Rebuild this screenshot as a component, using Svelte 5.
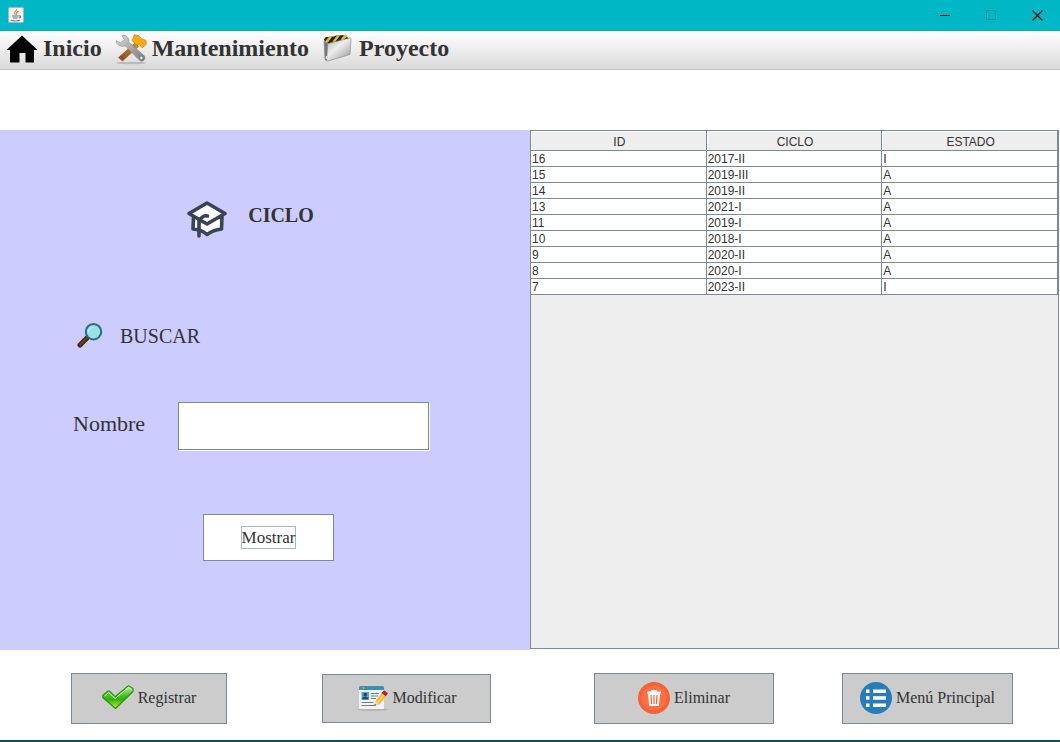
<script>
  const rows = [
    [16, '2017-II', 'I'],
    [15, '2019-III', 'A'],
    [14, '2019-II', 'A'],
    [13, '2021-I', 'A'],
    [11, '2019-I', 'A'],
    [10, '2018-I', 'A'],
    [9, '2020-II', 'A'],
    [8, '2020-I', 'A'],
    [7, '2023-II', 'I']
  ];
  let nombre = $state('');
</script>

<div class="window">
  <header class="titlebar">
    <svg class="java" width="16" height="16" viewBox="0 0 16 16" aria-hidden="true">
      <rect x=".5" y=".5" width="15" height="15" rx="1" fill="#f3f3f1" stroke="#a7b8ba" />
      <path d="M8.6 2.200c.8 1.500-2.700 2.400-2 4 .2.500.6.8 1 1.300M10.600 4.200C9 4.800 8 5.600 8.600 6.500c.3.500.1.9-.3 1.300" fill="none" stroke="#d9803c" stroke-width="1.100" />
      <path d="M4 9h6.400M4.800 11h5M3 13.200c2 .7 6.800 .7 9 0M10.500 9c3-.7 2.600 1.700.4 2" fill="none" stroke="#58788e" stroke-width="1.100" />
    </svg>
    <div class="controls">
      <button aria-label="Minimizar"><svg width="12" height="11" viewBox="0 0 12 11"><path d="M1 5.500h10" stroke="#111" /></svg></button>
      <button aria-label="Maximizar" disabled><svg width="11" height="11" viewBox="0 0 11 11"><path d="M.5.5h9v9h-9z" fill="none" stroke="#068f9c" /></svg></button>
      <button aria-label="Cerrar"><svg width="11" height="11" viewBox="0 0 11 11"><path d="M.5.5l10 10M10.500.5l-10 10" stroke="#111" stroke-width="1.200" /></svg></button>
    </div>
  </header>

  <nav class="menu">
    <button>
      <svg width="32" height="32" viewBox="0 0 32 32" aria-hidden="true"><path d="M16 2.500L31.500 17H28v12.500h-8.500V20h-6v9.500H4V17H.5z" fill="#000" /></svg>
      <span>Inicio</span>
    </button>
    <button>
      <svg width="32" height="32" viewBox="0 0 32 32" aria-hidden="true">
        <defs>
          <linearGradient id="steel" x1="0" y1="0" x2="1" y2="1"><stop stop-color="#ddd" /><stop offset=".5" stop-color="#a9a9a9" /><stop offset="1" stop-color="#777" /></linearGradient>
          <linearGradient id="wood" x1="1" y1="0" x2="0" y2="1"><stop stop-color="#d78b35" /><stop offset="1" stop-color="#85451b" /></linearGradient>
        </defs>
        <ellipse cx="16" cy="30" rx="15" ry="1.300" fill="#bbb" />
        <path d="M20 10l3.500 3.500L7.500 28 3.500 24.500z" fill="url(#wood)" stroke="#955626" stroke-width=".6" />
        <path d="M19.500 1.500l4.500 1.300 2.500 3 4.500 1.700.2 4-4 3.300-3-3-2.400.4-5-5 1.500-2.400z" fill="#f7a915" stroke="#d88305" stroke-width=".7" />
        <path d="M7 2.500c4-.9 7.300 2 6.700 6.500L29.600 23c1.400 3.400-1.800 6.400-4.600 4.800L10.200 12.800C6 14.400 1.400 11.800 1 7.700l4.500 2.100 3.800-3z" fill="url(#steel)" stroke="#888" stroke-width=".6" />
        <circle cx="26.300" cy="25" r="1.200" fill="#eee" />
      </svg>
      <span>Mantenimiento</span>
    </button>
    <button>
      <svg width="32" height="32" viewBox="0 0 32 32" aria-hidden="true">
        <defs><linearGradient id="folder" x1="0" y1="0" x2="1" y2="1"><stop stop-color="#aaa" /><stop offset=".45" stop-color="#eee" /><stop offset="1" stop-color="#929292" /></linearGradient></defs>
        <path d="M2 6.500L4 4l8-.4 2-1.100 10-.5 2 3-.4 4L4 12z" fill="#242018" />
        <path d="M3 8.500l4-4.700 3.200-.1L5.500 10zM10 9l5-6.500 3.200-.2L13.500 8.500zM18 7.500l4-5.400 2.300-.1 1 1.600L21.500 7z" fill="#e0b92c" />
        <path d="M2 8l4 2.500L28 5c1 0 1.300.5 1 1.500l-1 15L6 28c-2 .3-3-1-3-2.500z" fill="url(#folder)" stroke="#868686" stroke-width=".6" />
        <path d="M2.300 8.500l3.600 2.200L5 27.500c-1.600-.2-2.200-1.200-2.200-2.500z" fill="#777" />
        <path d="M4.500 23v3" stroke="#eee" stroke-width="1.500" />
      </svg>
      <span>Proyecto</span>
    </button>
  </nav>

  <main>
    <section class="search">
      <h1>
        <svg width="42" height="38" viewBox="0 0 42 38" aria-hidden="true" fill="#fff" stroke="#3a4255" stroke-width="3.600" stroke-linecap="round" stroke-linejoin="round">
          <path d="M7.500 17L7 29c4 .3 9.500 1.500 14 5.500 4.500-3.300 9-4.800 14.500-5.500L36 17z" />
          <path d="M21 3L39 13.500 21 24 3 13.500z" />
          <path d="M21.500 16c-2-.8-5 .2-8.500 4.500V36" fill="none" />
        </svg>
        CICLO
      </h1>
      <h2>
        <svg width="26" height="26" viewBox="0 0 26 26" aria-hidden="true">
          <path d="M10.500 14.500L3 22" stroke="#43220d" stroke-width="5" stroke-linecap="round" />
          <path d="M10 15L3.500 21.500" stroke="#71401e" stroke-width="2.200" stroke-linecap="round" />
          <circle cx="16.500" cy="8.700" r="7.700" fill="#9de1e8" stroke="#286f73" stroke-width="2" />
          <path d="M11.500 9c.2-3 2-4.600 5-4.700" fill="none" stroke="#c3f0f3" stroke-width="1" />
        </svg>
        BUSCAR
      </h2>
      <div class="field">
        <label for="nombre">Nombre</label>
        <input id="nombre" type="text" bind:value={nombre} />
      </div>
      <button class="show"><span>Mostrar</span></button>
    </section>

    <section class="pane">
      <table>
        <thead>
          <tr><th>ID</th><th>CICLO</th><th>ESTADO</th></tr>
        </thead>
        <tbody>
          {#each rows as row}
            <tr>{#each row as cell}<td>{cell}</td>{/each}</tr>
          {/each}
        </tbody>
      </table>
    </section>
  </main>

  <footer>
    <button>
      <svg width="32" height="32" viewBox="0 0 32 32" aria-hidden="true">
        <defs><linearGradient id="check" x1="0" y1="0" x2="0" y2="1"><stop stop-color="#b9f3a1" /><stop offset=".45" stop-color="#3fc21e" /><stop offset=".6" stop-color="#2eb30c" /><stop offset="1" stop-color="#c6f23b" /></linearGradient></defs>
        <path d="M.8 13.500L6 9l1.500.2 5.500 5.500L26.500 3.800l4.500 2.700v3L13.500 26.500.8 15.500z" fill="url(#check)" stroke="#2b8f17" stroke-width="1.200" stroke-linejoin="round" />
        <path d="M2.500 14L6.700 10.500 13 16.500 26.600 5.300 29.500 7.300" fill="none" stroke="#d4f8c3" stroke-width="1" />
      </svg>
      Registrar
    </button>
    <button class="modify">
      <svg width="32" height="32" viewBox="0 0 32 32" aria-hidden="true">
        <ellipse cx="16" cy="27.500" rx="15.500" ry="1.300" fill="#b2b2b2" />
        <rect x="2" y="5" width="25" height="22" rx="1" fill="#f2f3f5" />
        <path d="M2 8V5.500Q2 4 3.500 4h22Q27 4 27 5.500V8z" fill="#3990b4" />
        <circle cx="4" cy="6" r=".8" fill="#eb5c40" /><circle cx="6.500" cy="6" r=".8" fill="#f4cb45" />
        <rect x="4.500" y="10" width="7.500" height="7.500" fill="#55a6c6" />
        <circle cx="8.200" cy="12.500" r="1.800" fill="#174c70" /><path d="M5 17.500q.5-3 3.200-3t3.300 3z" fill="#174c70" />
        <path d="M14 11.500h8M14 14h7M14 16.500h5M4.500 20.500h12M4.500 23.500h13" stroke="#6c7f91" stroke-width="1.200" />
        <path d="M18.500 19L26 9.500l4 3-7.500 10-5 1z" fill="#f6b52d" />
        <path d="M20.500 21L28 11" stroke="#ffdc75" stroke-width="1.300" />
        <path d="M24.500 11L27 8.300l4 3-2.200 3z" fill="#a82836" />
        <path d="M18.500 19l4 3.500-5.200 1.200z" fill="#f3d7ae" /><path d="M17.800 22l1.500 1.300-2 .5z" fill="#222" />
      </svg>
      Modificar
    </button>
    <button>
      <svg width="32" height="32" viewBox="0 0 32 32" aria-hidden="true">
        <circle cx="16" cy="16" r="16" fill="#f26335" /><circle cx="16" cy="16" r="12.500" fill="#ff6f43" />
        <path d="M9 9.500h4V8h6v1.500h4v2h-1L20.800 24h-9.600L10 11.500H9z" fill="#fff" />
        <path d="M13 13l.6 9M16 13v9M19 13l-.6 9" stroke="#f26335" stroke-width="1.200" />
      </svg>
      Eliminar
    </button>
    <button>
      <svg width="32" height="32" viewBox="0 0 32 32" aria-hidden="true">
        <circle cx="16" cy="16" r="16" fill="#267db9" />
        <path d="M6 7.500h3.500V11H6zm7 0h13V11H13zM6 14.300h3.500v3.500H6zm7 0h13v3.500H13zM6 21.500h3.500V25H6zm7 0h13V25H13z" fill="#fff" />
      </svg>
      Menú Principal
    </button>
  </footer>
</div>

<style>
  :global(body) { margin: 0; }
  * { box-sizing: border-box; }
  svg { display: block; flex: none; }
  button { font: inherit; color: inherit; }
  .window {
    display: flex;
    flex-direction: column;
    min-height: 100vh;
    background: #fff;
    border-bottom: 2px solid #07525c;
    color: #333;
    font-family: "Baskerville Old Face", "Liberation Serif", serif;
  }
  .titlebar {
    display: flex;
    align-items: center;
    justify-content: space-between;
    height: 31px;
    padding-left: 8px;
    background: #00b7c5;
    border-bottom: 1px solid #10a9b5;
  }
  .controls { display: flex; height: 30px; }
  .controls button {
    display: grid;
    place-items: center;
    width: 46px;
    padding: 0;
    border: 0;
    background: none;
  }
  .menu {
    display: flex;
    gap: 13px;
    height: 39px;
    padding-left: 6px;
    background: linear-gradient(#fff, #dadada);
    border-bottom: 1px solid #c4c4c4;
    font-size: 24px;
    line-height: 30px;
    font-weight: bold;
  }
  .menu button {
    display: flex;
    align-items: flex-start;
    gap: 5px;
    padding: 2px 0;
    border: 0;
    background: none;
  }
  main {
    display: grid;
    grid-template-columns: 1fr 1fr;
    flex: 1;
    margin-top: 60px;
  }
  .search {
    display: flex;
    flex-direction: column;
    align-items: flex-start;
    padding: 70px 72px 89px;
    background: #ccccff;
  }
  h1, h2 {
    display: flex;
    align-items: center;
    margin: 0;
    font-size: 20px;
    line-height: 30px;
  }
  h1 { gap: 20px; align-self: center; align-items: flex-start; margin-left: -30px; }
  h2 { gap: 17px; margin: 83px 0 0 5px; font-weight: normal; }
  .field {
    display: flex;
    align-items: center;
    gap: 33px;
    width: 100%;
    margin-top: 51px;
    padding-left: 1px;
  }
  label { font-size: 22px; line-height: 44px; padding-bottom: 4px; }
  input {
    flex: 1;
    min-width: 0;
    max-width: 251px;
    height: 48px;
    padding: 0 6px;
    border: 1px solid #7a8a99;
    border-radius: 0;
    outline: 0;
    background: #fff;
    box-shadow: 1px 1px #fff;
    font: inherit;
    font-size: 20px;
  }
  .show {
    align-self: center;
    min-width: 131px;
    height: 47px;
    margin: 64px 0 0 7px;
    padding: 0;
    border: 1px solid #7a8a99;
    background: #fff;
    font-size: 17px;
    line-height: 21px;
  }
  .show span { display: inline-block; border: 1px solid #a3b8cc; }
  .pane {
    margin-right: 1px;
    margin-bottom: 1px;
    border: 1px solid #7a8a99;
    background: #eee;
    font: 12px/14px "Liberation Sans", Arial, sans-serif;
  }
  table {
    width: 100%;
    table-layout: fixed;
    border-collapse: separate;
    border-spacing: 0;
  }
  th, td {
    height: 16px;
    padding: 1px 1px 0;
    border-right: 1px solid #7a8a99;
    border-bottom: 1px solid #7a8a99;
    background: #fff;
    text-align: left;
    font-weight: normal;
  }
  th {
    height: 20px;
    padding: 3px 1px 0 3px;
    background: #eee;
    box-shadow: inset 1px 1px #fff;
    text-align: center;
  }
  footer {
    display: grid;
    grid-template-columns: 71fr 156fr 95fr 169fr 103fr 180fr 68fr 171fr 47fr;
    padding: 23px 0 16px;
    font-size: 16px;
    line-height: 20px;
  }
  footer button {
    display: flex;
    align-items: center;
    justify-content: center;
    gap: 4px;
    height: 51px;
    padding: 0 0 2px;
    border: 1px solid #7a8a99;
    background: #ccc;
    white-space: nowrap;
  }
  footer button:nth-child(1) { grid-column: 2; }
  footer button:nth-child(2) { grid-column: 4; }
  footer button:nth-child(3) { grid-column: 6; }
  footer button:nth-child(4) { grid-column: 8; }
  footer .modify { height: 49px; margin-top: 1px; }
</style>
